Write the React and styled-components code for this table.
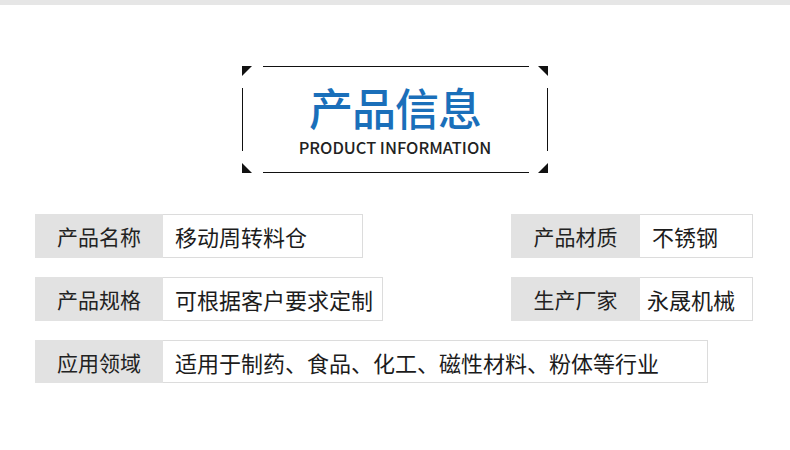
import styled, { createGlobalStyle } from "styled-components";

const GlobalStyle = createGlobalStyle`
  html, body {
    margin: 0;
    padding: 0;
    background: #fff;
  }
  body {
    font-family: "Noto Sans CJK SC", "Noto Sans", sans-serif;
    color: #222;
  }
`;

const Page = styled.div`
  width: 790px;
  height: 450px;
  overflow: hidden;
  background: #fff;
`;

const TopStrip = styled.div`
  height: 5px;
  background: #e6e6e6;
`;

const Header = styled.div`
  display: flex;
  justify-content: center;
  padding-top: 61px;
`;

const Frame = styled.div`
  position: relative;
  width: 306px;
  height: 107px;
  box-sizing: border-box;
  padding-top: 13px;
  display: flex;
  flex-direction: column;
  align-items: center;
`;

const HLine = styled.span`
  position: absolute;
  left: 21px;
  right: 19px;
  height: 1px;
  background: #111;
  ${(p) => (p.$bottom ? "bottom: 0;" : "top: 0;")}
`;

const VLine = styled.span`
  position: absolute;
  top: 22px;
  bottom: 22px;
  width: 1px;
  background: #111;
  ${(p) => (p.$right ? "right: 0;" : "left: 0;")}
`;

const Corner = styled.span`
  position: absolute;
  width: 0;
  height: 0;
  border-style: solid;
  ${(p) => (p.$v === "top" ? "top: 0;" : "bottom: 0;")}
  ${(p) => (p.$h === "left" ? "left: 0;" : "right: 0;")}
  ${(p) =>
    p.$v === "top" && p.$h === "left"
      ? "border-width: 10px 10px 0 0; border-color: #111 transparent transparent transparent;"
      : p.$v === "top"
      ? "border-width: 0 10px 10px 0; border-color: transparent #111 transparent transparent;"
      : p.$h === "left"
      ? "border-width: 10px 0 0 10px; border-color: transparent transparent transparent #111;"
      : "border-width: 0 0 10px 10px; border-color: transparent transparent #111 transparent;"}
`;

const Title = styled.div`
  font-size: 44px;
  line-height: 56px;
  font-weight: 500;
  color: #1a6fba;
  letter-spacing: -1px;
`;

const Subtitle = styled.div`
  margin-top: 1px;
  font-size: 16.4px;
  line-height: 22px;
  font-weight: 500;
  color: #222;
`;

const Table = styled.div`
  margin-top: 41px;
  padding: 0 37px 0 35px;
  display: flex;
  flex-direction: column;
  gap: 19px;
`;

const Line = styled.div`
  display: flex;
  justify-content: space-between;
`;

const Field = styled.div`
  display: flex;
  height: ${(p) => p.$h || 44}px;
`;

const Label = styled.div`
  width: ${(p) => p.$w || 128}px;
  display: flex;
  align-items: center;
  justify-content: center;
  background: #e2e2e2;
  font-size: 21px;
  color: #222;
`;

const Value = styled.div`
  width: ${(p) => p.$w}px;
  box-sizing: border-box;
  display: flex;
  align-items: center;
  padding-left: ${(p) => p.$pl ?? 12}px;
  border: 1px solid #dcdcdc;
  border-left: none;
  background: #fff;
  font-size: 22px;
  color: #1c1c1c;
  white-space: nowrap;
`;

function Tag() {
  return (
    <>
      <HLine />
      <HLine $bottom />
      <VLine />
      <VLine $right />
      <Corner $v="top" $h="left" />
      <Corner $v="top" $h="right" />
      <Corner $v="bottom" $h="left" />
      <Corner $v="bottom" $h="right" />
    </>
  );
}

export default function App() {
  return (
    <Page>
      <GlobalStyle />
      <TopStrip />
      <Header>
        <Frame>
          <Tag />
          <Title>产品信息</Title>
          <Subtitle>PRODUCT INFORMATION</Subtitle>
        </Frame>
      </Header>
      <Table>
        <Line>
          <Field>
            <Label>产品名称</Label>
            <Value $w={200}>移动周转料仓</Value>
          </Field>
          <Field>
            <Label $w={129}>产品材质</Label>
            <Value $w={113}>不锈钢</Value>
          </Field>
        </Line>
        <Line>
          <Field>
            <Label>产品规格</Label>
            <Value $w={220}>可根据客户要求定制</Value>
          </Field>
          <Field>
            <Label $w={129}>生产厂家</Label>
            <Value $w={113} $pl={7}>永晟机械</Value>
          </Field>
        </Line>
        <Line>
          <Field $h={43}>
            <Label>应用领域</Label>
            <Value $w={545}>适用于制药、食品、化工、磁性材料、粉体等行业</Value>
          </Field>
        </Line>
      </Table>
    </Page>
  );
}
